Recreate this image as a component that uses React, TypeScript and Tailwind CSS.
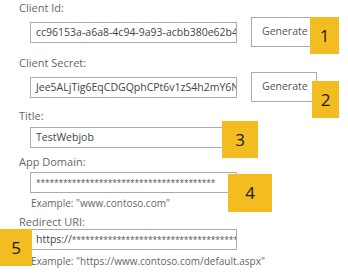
import React from 'react';

const font = { fontFamily: '"Open Sans", "Noto Sans", sans-serif' };

const Label: React.FC<{ text: string; className?: string }> = ({ text, className = '' }) => (
  <div className={`h-[14px] pl-[19px] text-[11px] leading-[14px] text-[#666] ${className}`}>{text}</div>
);

const Field: React.FC<{ children: React.ReactNode }> = ({ children }) => (
  <div className="h-[21px] w-[207px] shrink-0 overflow-hidden whitespace-nowrap border border-[#ababab] bg-white pl-[5px] text-[10.5px] leading-[19px] text-[#444]">
    {children}
  </div>
);

const Stars: React.FC<{ count: number }> = ({ count }) => (
  <span className="text-[8.5px] tracking-[-0.2px] text-[#555]">{'*'.repeat(count)}</span>
);

const Badge: React.FC<{ n: number; className: string }> = ({ n, className }) => (
  <div
    className={`absolute flex items-center justify-center bg-[#f3bc21] text-[17px] text-[#1a1a1a] ${className}`}
  >
    {n}
  </div>
);

const GenerateButton: React.FC = () => (
  <button className="ml-[14px] h-[30px] w-[66px] border border-[#ababab] bg-white pl-[10px] text-left text-[10.5px] text-[#555]">
    Generate
  </button>
);

export default function App() {
  return (
    <div className="relative h-[275px] w-[348px] overflow-hidden bg-white" style={font}>
      <div className="pt-[1px]">
        <Label text="Client Id:" />
        <div className="mt-[2px] flex h-[30px] items-center pl-[30px]">
          <Field>cc96153a-a6a8-4c94-9a93-acbb380e62b4</Field>
          <GenerateButton />
        </div>

        <Label text="Client Secret:" className="mt-[9px]" />
        <div className="mt-[2px] flex h-[30px] items-center pl-[30px]">
          <Field>Jee5ALjTig6EqCDGQphCPt6v1zS4h2mY6Nq0k8FcX1w=</Field>
          <GenerateButton />
        </div>

        <Label text="Title:" className="mt-[7px]" />
        <div className="mt-[4px] pl-[30px]">
          <Field>TestWebjob</Field>
        </div>

        <Label text="App Domain:" className="mt-[7px]" />
        <div className="mt-[3px] pl-[30px]">
          <Field>
            <Stars count={40} />
          </Field>
        </div>
        <div className="mt-[3px] h-[14px] pl-[31px] text-[10px] leading-[14px] text-[#666]">
          Example: "www.contoso.com"
        </div>

        <Label text="Redirect URI:" className="mt-[5px]" />
        <div className="pl-[30px]">
          <Field>
            https://<Stars count={50} />
          </Field>
        </div>
        <div className="mt-[4px] h-[14px] pl-[31px] text-[10px] leading-[14px] text-[#666]">
          Example: "https://www.contoso.com/default.aspx"
        </div>
      </div>

      <Badge n={1} className="left-[310px] top-[17px] h-[37px] w-[29px]" />
      <Badge n={2} className="left-[312px] top-[81px] h-[37px] w-[27px]" />
      <Badge n={3} className="left-[222px] top-[121px] h-[37px] w-[36px]" />
      <Badge n={4} className="left-[228px] top-[174px] h-[38px] w-[44px]" />
      <Badge n={5} className="left-0 top-[229px] h-[37px] w-[32px]" />
    </div>
  );
}
